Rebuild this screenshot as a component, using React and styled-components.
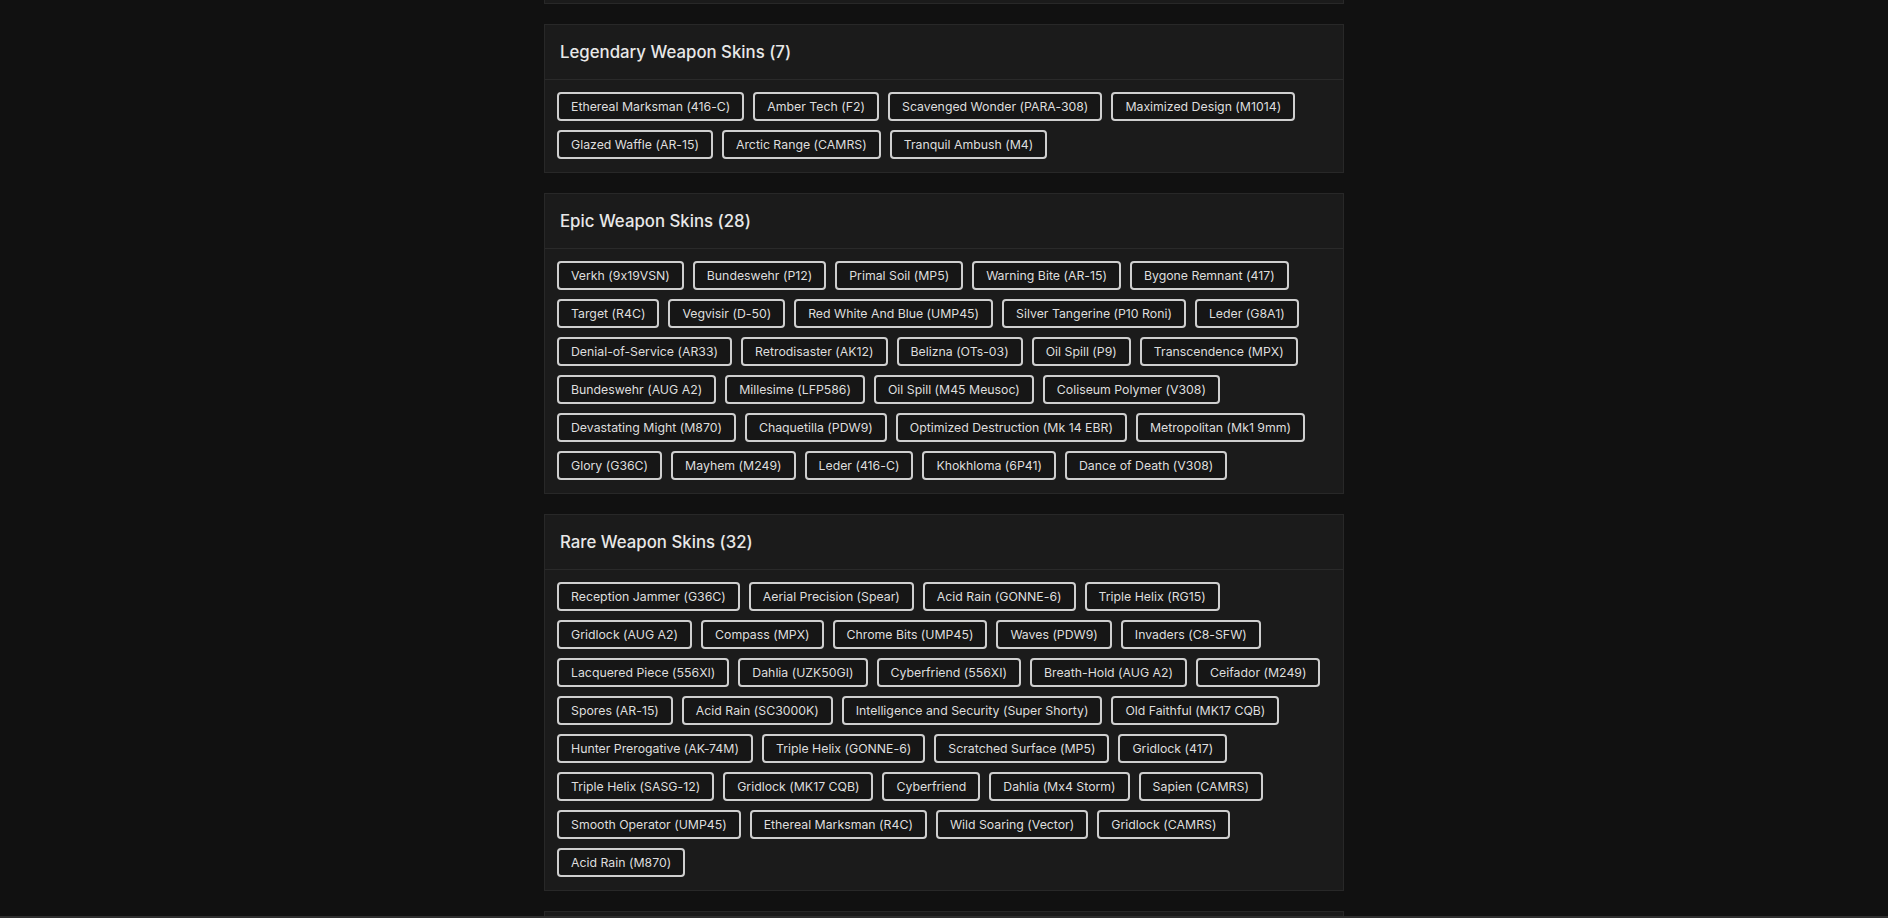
import React, { useLayoutEffect, useRef } from 'react';
import styled, { createGlobalStyle } from 'styled-components';

const GlobalStyle = createGlobalStyle`
  html {
    scrollbar-width: none;
  }
  html::-webkit-scrollbar {
    display: none;
  }
  body {
    margin: 0;
    background: #111111;
    font-family: Inter, "Open Sans", "Liberation Sans", sans-serif;
    font-feature-settings: "calt" 0;
    color: #e6e6e6;
  }
`;

const sections = [
  {
    key: 'exotic',
    title: 'Exotic Weapon Skins',
    skins: ['Blood Moon (Vector)', 'Neon Circuit (AK12)', 'Grim Reaper (M4)'],
  },
  {
    key: 'legendary',
    title: 'Legendary Weapon Skins',
    skins: [
      'Ethereal Marksman (416-C)',
      'Amber Tech (F2)',
      'Scavenged Wonder (PARA-308)',
      'Maximized Design (M1014)',
      'Glazed Waffle (AR-15)',
      'Arctic Range (CAMRS)',
      'Tranquil Ambush (M4)',
    ],
  },
  {
    key: 'epic',
    title: 'Epic Weapon Skins',
    skins: [
      'Verkh (9x19VSN)',
      'Bundeswehr (P12)',
      'Primal Soil (MP5)',
      'Warning Bite (AR-15)',
      'Bygone Remnant (417)',
      'Target (R4C)',
      'Vegvisir (D-50)',
      'Red White And Blue (UMP45)',
      'Silver Tangerine (P10 Roni)',
      'Leder (G8A1)',
      'Denial-of-Service (AR33)',
      'Retrodisaster (AK12)',
      'Belizna (OTs-03)',
      'Oil Spill (P9)',
      'Transcendence (MPX)',
      'Bundeswehr (AUG A2)',
      'Millesime (LFP586)',
      'Oil Spill (M45 Meusoc)',
      'Coliseum Polymer (V308)',
      'Devastating Might (M870)',
      'Chaquetilla (PDW9)',
      'Optimized Destruction (Mk 14 EBR)',
      'Metropolitan (Mk1 9mm)',
      'Glory (G36C)',
      'Mayhem (M249)',
      'Leder (416-C)',
      'Khokhloma (6P41)',
      'Dance of Death (V308)',
    ],
  },
  {
    key: 'rare',
    title: 'Rare Weapon Skins',
    skins: [
      'Reception Jammer (G36C)',
      'Aerial Precision (Spear)',
      'Acid Rain (GONNE-6)',
      'Triple Helix (RG15)',
      'Gridlock (AUG A2)',
      'Compass (MPX)',
      'Chrome Bits (UMP45)',
      'Waves (PDW9)',
      'Invaders (C8-SFW)',
      'Lacquered Piece (556XI)',
      'Dahlia (UZK50GI)',
      'Cyberfriend (556XI)',
      'Breath-Hold (AUG A2)',
      'Ceifador (M249)',
      'Spores (AR-15)',
      'Acid Rain (SC3000K)',
      'Intelligence and Security (Super Shorty)',
      'Old Faithful (MK17 CQB)',
      'Hunter Prerogative (AK-74M)',
      'Triple Helix (GONNE-6)',
      'Scratched Surface (MP5)',
      'Gridlock (417)',
      'Triple Helix (SASG-12)',
      'Gridlock (MK17 CQB)',
      'Cyberfriend',
      'Dahlia (Mx4 Storm)',
      'Sapien (CAMRS)',
      'Smooth Operator (UMP45)',
      'Ethereal Marksman (R4C)',
      'Wild Soaring (Vector)',
      'Gridlock (CAMRS)',
      'Acid Rain (M870)',
    ],
  },
  {
    key: 'uncommon',
    title: 'Uncommon Weapon Skins',
    skins: [
      'Urban Camo (M4)',
      'Desert Storm (AK12)',
      'Woodland (MP5)',
      'Arctic (R4C)',
      'Tiger Stripe (F2)',
      'Digital (UMP45)',
    ],
  },
];

const App = () => {
  const anchor = useRef(null);

  // the page is shown scrolled down to the legendary list
  useLayoutEffect(() => {
    if (!anchor.current) return;
    const top = anchor.current.getBoundingClientRect().top + window.scrollY;
    window.scrollTo(0, top - 24);
  }, []);

  return (
    <>
      <GlobalStyle />
      <Page>
        {sections.map((s) => (
          <Card key={s.key} ref={s.key === 'legendary' ? anchor : null}>
            <CardHeader>
              <Title>
                {s.title} ({s.skins.length})
              </Title>
            </CardHeader>
            <ChipList>
              {s.skins.map((name, i) => (
                <Chip key={i}>{name}</Chip>
              ))}
            </ChipList>
          </Card>
        ))}
      </Page>
      <BottomBar />
    </>
  );
};

export default App;

const Page = styled.main`
  width: 800px;
  margin: 0 auto;
  padding: 20px 0 40px;
  display: flex;
  flex-direction: column;
  gap: 20px;
`;

const Card = styled.section`
  background: #1b1b1b;
  border: 1px solid #282828;
`;

const CardHeader = styled.header`
  padding: 16px 15px;
  border-bottom: 1px solid #2a2a2a;
`;

const Title = styled.h2`
  margin: 0;
  font-size: 16.8px;
  line-height: 22px;
  font-weight: 500;
  color: #e8e8e8;
`;

const ChipList = styled.div`
  padding: 12px 12px 13px;
  display: flex;
  flex-wrap: wrap;
  gap: 9px;
`;

const Chip = styled.span`
  display: inline-block;
  padding: 4px 12px;
  font-size: 12.3px;
  line-height: 17px;
  color: #dedede;
  background: #161616;
  border: 2px solid #cfcfcf;
  border-radius: 4px;
  white-space: nowrap;
`;

const BottomBar = styled.div`
  position: fixed;
  left: 0;
  right: 0;
  bottom: 0;
  height: 2px;
  background: #2f2f2f;
`;
